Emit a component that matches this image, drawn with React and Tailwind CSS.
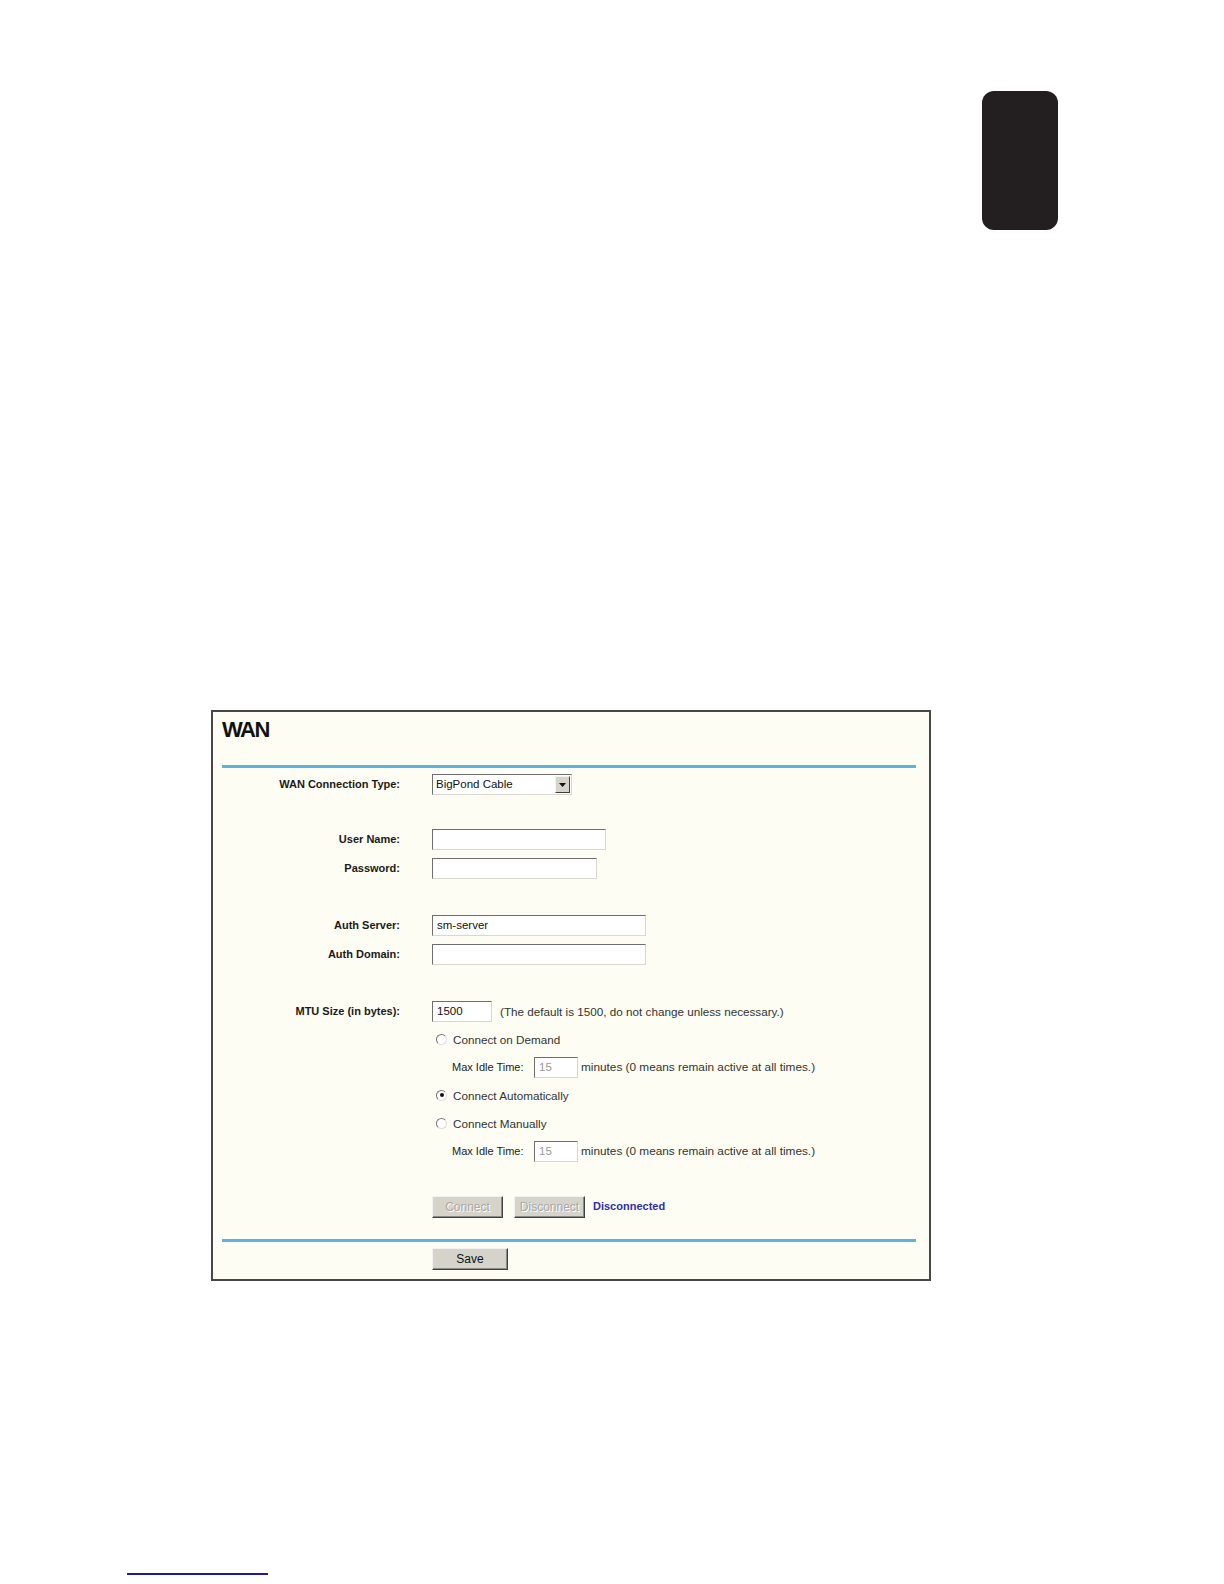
import React from "react";

const font = { fontFamily: '"Liberation Sans", Arial, Helvetica, sans-serif' };

function Label({ children }) {
  return (
    <div className="w-[187px] shrink-0 text-right text-[11px] font-bold text-[#1a1a1a]">
      {children}
    </div>
  );
}

function Input({ w, value, muted }) {
  return (
    <div
      className={`h-[21px] ${w} bg-white border border-t-[#6e6e6e] border-l-[#6e6e6e] border-r-[#d8d8d0] border-b-[#d8d8d0] flex items-center pl-[4px] text-[11.5px] ${muted ? "text-[#9a9a9a]" : "text-[#111]"}`}
    >
      {value}
    </div>
  );
}

function Radio({ checked }) {
  return (
    <div className="w-[11px] h-[11px] rounded-full bg-white border border-t-[#777] border-l-[#777] border-r-[#ddd] border-b-[#ddd] flex items-center justify-center">
      {checked && <div className="w-[4px] h-[4px] rounded-full bg-[#111]" />}
    </div>
  );
}

function Row({ label, children, className = "" }) {
  return (
    <div className={`flex items-center h-[21px] ${className}`}>
      <Label>{label}</Label>
      <div className="ml-[32px] flex items-center">{children}</div>
    </div>
  );
}

function Btn({ children, w, disabled }) {
  return (
    <div
      className={`h-[22px] ${w} bg-[#d6d3cb] border border-t-[#f2f2f2] border-l-[#f2f2f2] border-r-[#404040] border-b-[#404040] shadow-[inset_-1px_-1px_0_#8a8a8a] flex items-center justify-center text-[12px] ${disabled ? "text-[#a8a8a8] [text-shadow:1px_1px_0_#ffffff]" : "text-[#111]"}`}
    >
      {children}
    </div>
  );
}

export default function App() {
  return (
    <div className="w-[1224px] h-[1584px] bg-white flex flex-col" style={font}>
      <div className="mt-[91px] ml-[982px] w-[76px] h-[139px] rounded-[12px] bg-[#231f20]" />

      <div className="mt-[480px] ml-[211px] w-[720px] h-[571px] border-2 border-[#474747] bg-[#fdfdf4] flex flex-col">
        <div className="pt-[5px] pl-[9px] text-[22px] leading-[26px] font-bold tracking-[-1.5px] text-[#111]">
          WAN
        </div>
        <div className="mt-[22px] ml-[9px] w-[694px] h-[3px] bg-[#58b6dd]" />

        <Row label="WAN Connection Type:" className="mt-[6px]">
          <div className="h-[21px] w-[140px] bg-white border border-t-[#6e6e6e] border-l-[#6e6e6e] border-r-[#d8d8d0] border-b-[#d8d8d0] flex items-center justify-between pl-[3px] pr-[1px]">
            <span className="text-[11.5px] text-[#111]">BigPond Cable</span>
            <div className="w-[15px] h-[17px] bg-[#d6d3cb] border border-t-[#f2f2f2] border-l-[#f2f2f2] border-r-[#404040] border-b-[#404040] flex items-center justify-center">
              <svg width="7" height="4" viewBox="0 0 7 4">
                <path d="M0 0 H7 L3.5 4 Z" fill="#111" />
              </svg>
            </div>
          </div>
        </Row>

        <Row label="User Name:" className="mt-[34px]">
          <Input w="w-[174px]" />
        </Row>
        <Row label="Password:" className="mt-[8px]">
          <Input w="w-[165px]" />
        </Row>

        <Row label="Auth Server:" className="mt-[36px]">
          <Input w="w-[214px]" value="sm-server" />
        </Row>
        <Row label="Auth Domain:" className="mt-[8px]">
          <Input w="w-[214px]" />
        </Row>

        <Row label="MTU Size (in bytes):" className="mt-[36px]">
          <Input w="w-[60px]" value="1500" />
          <span className="ml-[8px] text-[11.7px] text-[#333]">
            (The default is 1500, do not change unless necessary.)
          </span>
        </Row>

        <div className="mt-[7px] flex flex-col gap-[7px] text-[11.7px] text-[#333]">
          <Row label="">
            <div className="ml-[4px] flex items-center gap-[6px]">
              <Radio />
              <span>Connect on Demand</span>
            </div>
          </Row>
          <Row label="">
            <div className="ml-[20px] flex items-center">
              <span className="w-[82px] text-[#222] text-[11px]">Max Idle Time:</span>
              <Input w="w-[44px]" value="15" muted />
              <span className="ml-[3px] text-[11.8px]">minutes (0 means remain active at all times.)</span>
            </div>
          </Row>
          <Row label="">
            <div className="ml-[4px] flex items-center gap-[6px]">
              <Radio checked />
              <span>Connect Automatically</span>
            </div>
          </Row>
          <Row label="">
            <div className="ml-[4px] flex items-center gap-[6px]">
              <Radio />
              <span>Connect Manually</span>
            </div>
          </Row>
          <Row label="">
            <div className="ml-[20px] flex items-center">
              <span className="w-[82px] text-[#222] text-[11px]">Max Idle Time:</span>
              <Input w="w-[44px]" value="15" muted />
              <span className="ml-[3px] text-[11.8px]">minutes (0 means remain active at all times.)</span>
            </div>
          </Row>
        </div>

        <Row label="" className="mt-[34px]">
          <Btn w="w-[71px]" disabled>Connect</Btn>
          <div className="ml-[11px]">
            <Btn w="w-[71px]" disabled>Disconnect</Btn>
          </div>
          <span className="ml-[8px] text-[11px] font-bold text-[#2f2fa6]">Disconnected</span>
        </Row>

        <div className="mt-[22px] ml-[9px] w-[694px] h-[3px] bg-[#58b6dd]" />

        <Row label="" className="mt-[6px] h-[22px]">
          <Btn w="w-[76px]">Save</Btn>
        </Row>
      </div>

      <div className="mt-auto mb-[9px] ml-[127px] w-[141px] h-[2px] bg-[#1d1d8f]" />
    </div>
  );
}
